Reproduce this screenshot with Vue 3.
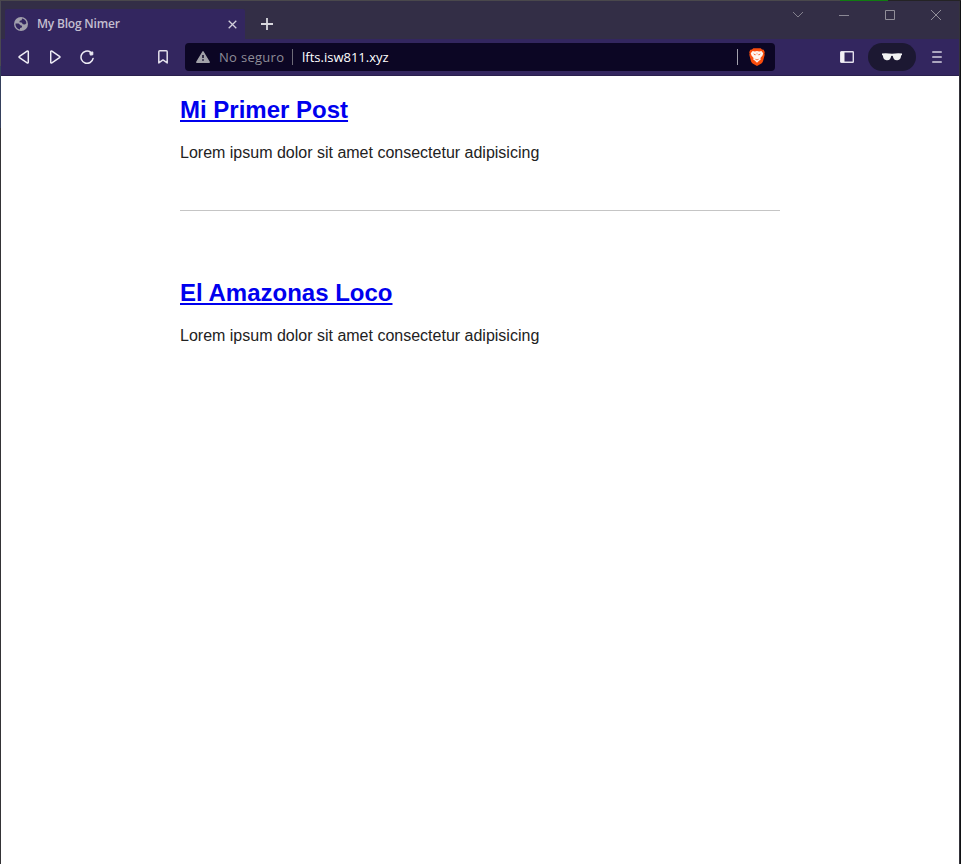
<script setup>
const posts = [
  { title: 'Mi Primer Post', excerpt: 'Lorem ipsum dolor sit amet consectetur adipisicing' },
  { title: 'El Amazonas Loco', excerpt: 'Lorem ipsum dolor sit amet consectetur adipisicing' }
]
</script>

<template>
  <div class="window">
    <div class="edge-top"><span class="edge-gray"></span><span class="edge-green"></span><span class="edge-dark"></span></div>
    <div class="body-row">
      <div class="edge-left"><span class="el-a"></span><span class="el-b"></span><span class="el-c"></span></div>
      <div class="main">
        <header class="tabs">
          <div class="tab">
            <svg class="globe" width="14" height="14" viewBox="0 0 14 14">
              <circle cx="7" cy="7" r="7" fill="#a19fac" />
              <path d="M8 1.6 7.7 3.3 5.8 3.8 5.4 5.3 7.6 5.4 8.9 7.2 11 7.4 12.4 6.2C12.2 3.7 10.4 1.8 8 1.6ZM1.5 6.5 4.6 6.6 6.8 8.4 8.1 8.8 7.8 10.6 6.1 11 5.9 12.4C3.2 12 1.2 9.5 1.5 6.5Z" fill="#33265f" />
            </svg>
            <span class="tab-title">My Blog Nimer</span>
            <svg class="close" width="9" height="9" viewBox="0 0 9 9"><path d="M.7.7l7.6 7.6M8.3.7.7 8.3" stroke="#d2cfdc" stroke-width="1.3" /></svg>
          </div>
          <svg class="plus" width="12" height="12" viewBox="0 0 12 12"><path d="M6 0v12M0 6h12" stroke="#d8d7dd" stroke-width="1.8" /></svg>
          <div class="controls">
            <svg width="12" height="8" viewBox="0 0 12 8"><path d="M1 1l5 5 5-5" fill="none" stroke="#83808d" /></svg>
            <svg width="12" height="12" viewBox="0 0 12 12"><path d="M1 6.5h10" stroke="#8b8895" /></svg>
            <svg width="12" height="12" viewBox="0 0 12 12"><path d="M1.5 1.5h9v9h-9z" fill="none" stroke="#918e99" /></svg>
            <svg width="12" height="12" viewBox="0 0 12 12"><path d="M1 1l10 10M11 1 1 11" stroke="#918e99" /></svg>
          </div>
        </header>
        <nav class="toolbar">
          <svg class="back" width="12" height="14" viewBox="0 0 12 14"><path d="M9.1 1.2 1.5 6.3q-.9.7 0 1.4l7.6 5.1q1.2.6 1.2-.7V1.9q0-1.3-1.2-.7Z" fill="none" stroke="#eeecf5" stroke-width="1.5" /></svg>
          <svg class="forward" width="12" height="14" viewBox="0 0 12 14"><path d="M1.9 1.2l7.6 5.1q.9.7 0 1.4l-7.6 5.1Q.7 13.4.7 12.1V1.9Q.7.6 1.9 1.2Z" fill="none" stroke="#eeecf5" stroke-width="1.5" /></svg>
          <svg class="reload" width="14" height="14" viewBox="0 0 14 14"><path d="M10.6 2.2A6.1 6.1 0 1 0 13.1 8.4" fill="none" stroke="#eeecf5" stroke-width="1.5" stroke-linecap="round" /><path d="M9.8 2.6 12.8 1.9V4.8l-2.5.3Z" fill="#eeecf5" stroke="#eeecf5" stroke-linejoin="round" /></svg>
          <svg class="bookmark" width="10" height="14" viewBox="0 0 10 14"><path d="M.8 12.9V1.8q0-1 1-1h6.4q1 0 1 1v11.1L5 9.9Z" fill="none" stroke="#e3e0eb" stroke-width="1.5" stroke-linejoin="round" /></svg>
          <div class="address">
            <svg class="warning" width="14" height="12" viewBox="0 0 14 12"><path d="M7 .8 13.2 11.2H.8Z" fill="#a2a1a8" stroke="#a2a1a8" stroke-width="1.4" stroke-linejoin="round" /><path d="M7 4v3M7 8.3v1.5" stroke="#0c0624" stroke-width="1.5" /></svg>
            <span class="insecure">No seguro</span>
            <span class="divider"></span>
            <span class="url">lfts.isw811.xyz</span>
            <span class="divider end"></span>
            <svg class="lion" width="16" height="18" viewBox="0 0 16 18">
              <path d="M4.3.2h7.4l1.3 1.4 1.7.2 1.1 2.5-.4 1.2.3 1.2-1.7 6.5q-.5 1.4-1.6 2.2L8 18l-4.4-2.6Q2.5 14.6 2 13.2L.3 6.7l.3-1.2-.4-1.2 1.1-2.5L3 1.6Z" fill="#fa4c0c" />
              <path d="M3.6 3 5.8 3.4 8 2.9l2.2.5 2.2-.4 1.8 2.2-.7 2.3-2.1 2.6.4 1.3-1.8 1.4L8 14.8 6 12.8 4.2 11.4 4.6 10.1 2.5 7.5 1.8 5.2Z" fill="#fff5ef" />
              <path d="M4 5.6 6.7 6.3 6.2 7.5ZM12 5.6 9.3 6.3 9.8 7.5ZM5.5 10.4 8 11.5 10.5 10.4 8.6 12.2H7.4Z" fill="#f75720" />
              <path d="M7.5 4.8h1L8.3 6.6H7.7Z" fill="#f9a27f" />
            </svg>
          </div>
          <svg class="sidebar" width="14" height="12" viewBox="0 0 14 12"><rect x=".7" y=".7" width="12.6" height="10.6" rx=".6" fill="none" stroke="#e2dfec" stroke-width="1.4" /><path d="M1 1h3.5v10H1z" fill="#f2f0f5" /></svg>
          <div class="private">
            <svg width="20" height="8" viewBox="0 0 20 8"><path d="M0 .4Q5-.2 10 .8q5-1 10-.4v1.5l-.9.5Q18.8 6.8 15.5 7.2 11.5 7.7 10.8 3q-.8-.7-1.6 0Q8.5 7.7 4.5 7.2 1.2 6.8.9 2.4L0 1.9Z" fill="#f2f2f3" /></svg>
          </div>
          <svg class="menu" width="10" height="14" viewBox="0 0 10 14"><path d="M.8 2h8.4M.8 7h8.4M.8 12h8.4" stroke="#d5d1e0" stroke-width="1.7" stroke-linecap="round" /></svg>
        </nav>
        <main class="page">
          <article v-for="post in posts" :key="post.title">
            <h1><a href="#">{{ post.title }}</a></h1>
            <p>{{ post.excerpt }}</p>
          </article>
        </main>
      </div>
      <div class="edge-right"></div>
    </div>
  </div>
</template>

<style>
body { margin: 0; overflow: hidden; }
</style>

<style scoped>
.window { width: 961px; height: 864px; display: flex; flex-direction: column; background: #fff; box-sizing: border-box; }
svg { display: block; flex: none; }
.edge-top { height: 1px; display: flex; flex: none; }
.edge-gray { width: 840px; background: #4a484c; }
.edge-green { width: 48px; background: #107c10; }
.edge-dark { flex: 1; background: #242325; }
.body-row { flex: 1; display: flex; min-height: 0; }
.edge-left { width: 1px; display: flex; flex-direction: column; }
.el-a { height: 65px; background: #4a4851; }
.el-b { height: 62px; background: #35405c; }
.el-c { flex: 1; background: #343336; }
.main { width: 958px; }
.edge-right { width: 2px; box-sizing: border-box; border-left: 1px solid #34333a; background: #111214; }
.tabs { height: 38px; background: #332e46; display: flex; align-items: flex-start; }
.tab { width: 240px; height: 30px; margin: 8px 0 0 4px; box-sizing: border-box; padding: 0 8px 0 9px; background: #33265f; border-radius: 2px 2px 0 0; display: flex; align-items: center; }
.tab-title { margin-left: 9px; font: 600 12px/16px "Open Sans", "Noto Sans", sans-serif; letter-spacing: -.2px; color: #c3bfd0; white-space: nowrap; }
.close { margin-left: auto; }
.plus { margin: 17px 0 0 16px; }
.controls { margin-left: auto; padding: 8px 17px 0 0; display: flex; gap: 34px; align-items: center; }
.toolbar { height: 37px; box-sizing: border-box; background: #33265f; border-bottom: 1px solid #2a204d; display: flex; align-items: center; }
.back { margin-left: 17px; }
.forward { margin-left: 20px; }
.reload { margin-left: 18px; }
.bookmark { margin-left: 64px; }
.address { width: 590px; height: 28px; margin-left: 17px; box-sizing: border-box; padding: 0 10px 0 11px; background: #0c0624; border-radius: 4px; display: flex; align-items: center; font: 13px/18px "Open Sans", "Noto Sans", sans-serif; white-space: nowrap; }
.insecure { margin-left: 9px; width: 65px; letter-spacing: .3px; color: #8f8d98; }
.divider { width: 1px; height: 16px; margin-left: 8px; background: #6e6b78; }
.url { margin-left: 9px; color: #fff; }
.divider.end { margin-left: auto; background: #a3a0ad; }
.lion { margin-left: 11px; }
.sidebar { margin-left: 65px; }
.private { width: 48px; height: 28px; margin-left: 14px; border-radius: 14px; background: #1c1832; display: flex; align-items: center; justify-content: center; }
.menu { margin-left: 16px; }
.page { width: 600px; margin: 0 auto; font: 16px/25px "Liberation Sans", Arial, sans-serif; color: #222; }
article { height: 134px; box-sizing: border-box; padding-top: 19px; }
article + article { height: 183px; padding-top: 67px; border-top: 1px solid #c5c5c5; }
h1 { margin: 0; font-size: 24px; line-height: 30px; }
a { color: #00e; text-decoration: underline; }
p { margin: 15px 0 0; }
</style>
